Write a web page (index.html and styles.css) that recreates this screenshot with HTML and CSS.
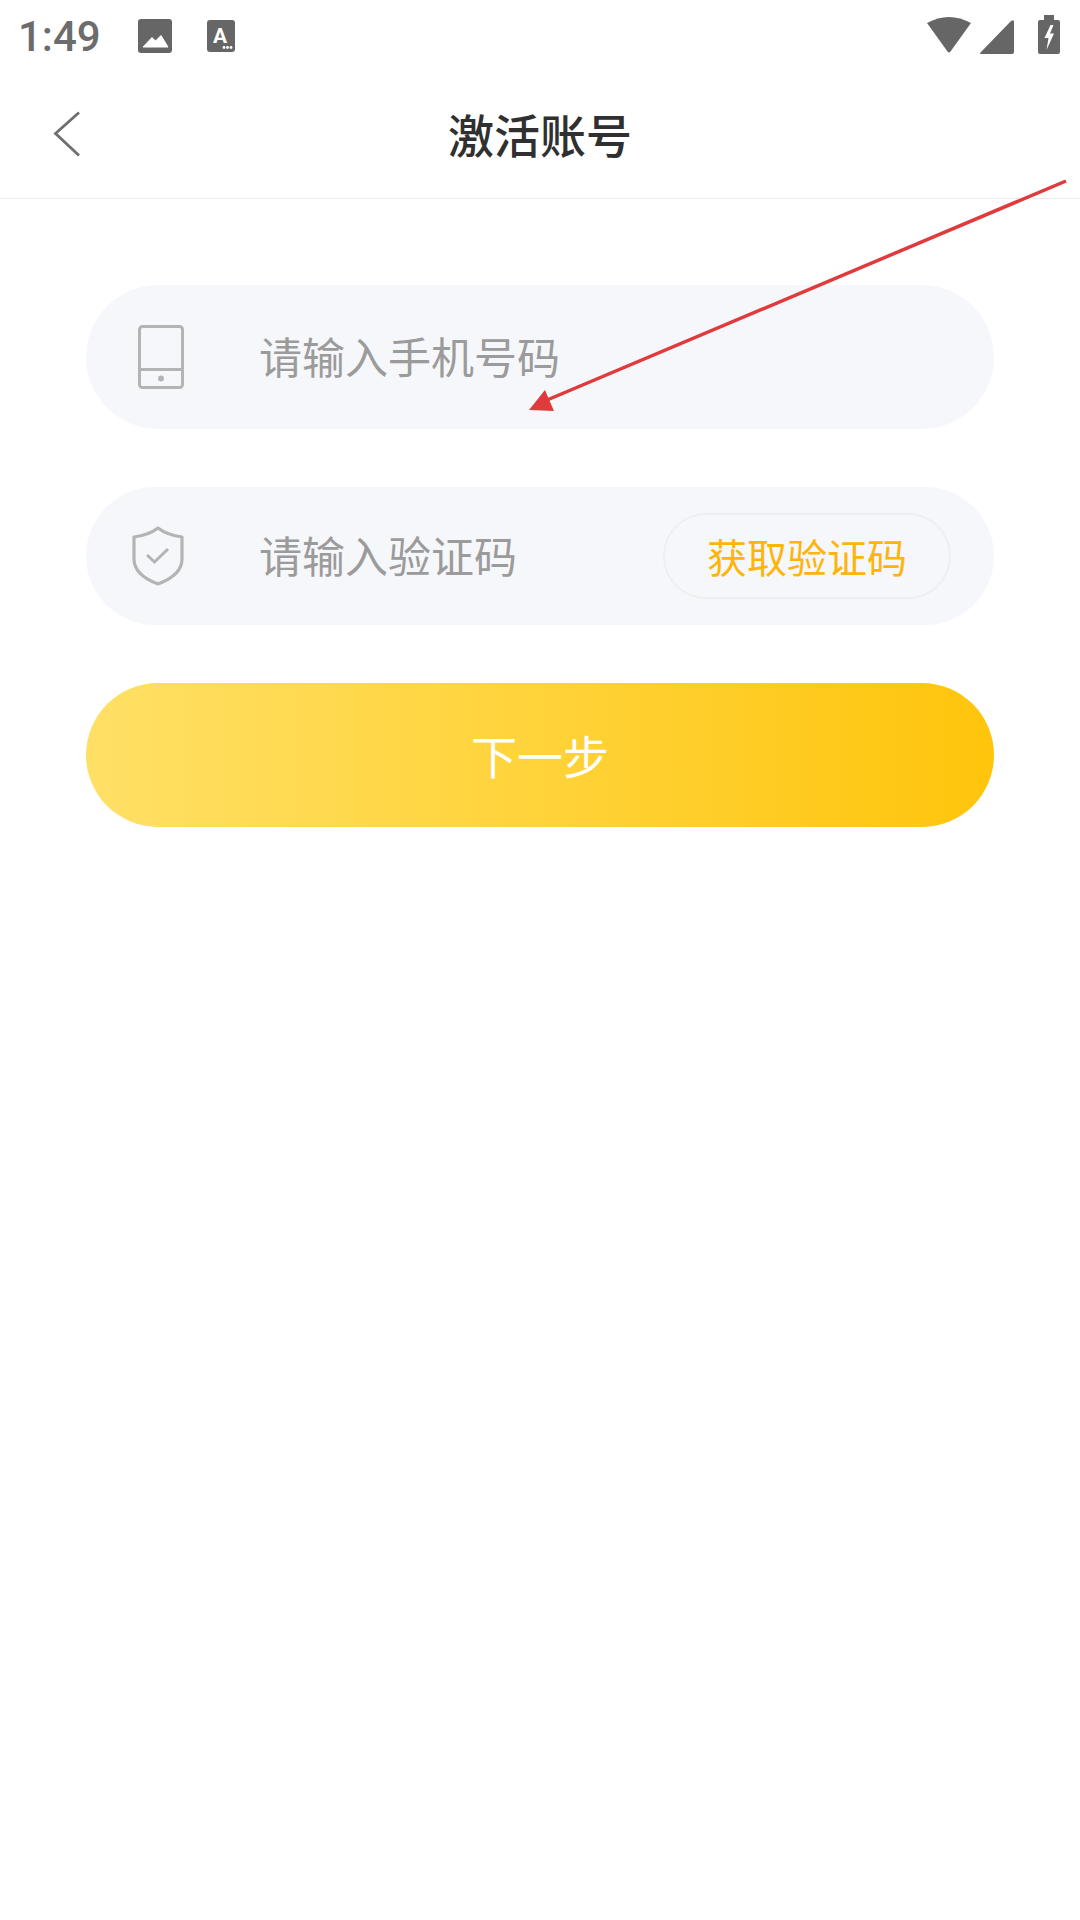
FILE: index.html
```html
<!DOCTYPE html>
<html lang="zh-CN">
<head>
<meta charset="utf-8">
<title>激活账号</title>
<link rel="stylesheet" href="styles.css">
</head>
<body>
<div class="page">
  <div class="status-bar">
    <div class="status-left">
      <span class="time">1:49</span>
      <svg class="ic-image" viewBox="0 0 34 34"><rect width="34" height="34" rx="3" fill="#666"/><path d="M5 28 L14 18.500 L17.500 22 L23 16.500 L30 28Z" fill="#fff" stroke="#fff" stroke-linejoin="round"/></svg>
      <svg class="ic-a" viewBox="0 0 28 32"><rect width="28" height="32" rx="3" fill="#666"/><text x="13" y="23" class="ic-a-text">A</text><circle cx="17" cy="27.500" r="1.400" fill="#fff"/><circle cx="20.500" cy="27.500" r="1.400" fill="#fff"/><circle cx="24" cy="27.500" r="1.400" fill="#fff"/></svg>
    </div>
    <div class="status-right">
      <svg class="ic-wifi" viewBox="0 0 46 36"><path d="M1 6 Q23 -6 45 6 L24.500 34.500 Q23 36.500 21.500 34.500Z" fill="#666"/></svg>
      <svg class="ic-signal" viewBox="0 0 34 34"><path d="M1 34 Q-.5 34 .5 32.500 L31 1 Q34 -1 34 2 V32 Q34 34 32 34Z" fill="#666"/></svg>
      <svg class="ic-battery" viewBox="0 0 22 39"><path d="M6 0 H16 V5 H20 Q22 5 22 7 V37 Q22 39 20 39 H2 Q0 39 0 37 V7 Q0 5 2 5 H6Z" fill="#666"/><path d="M12.500 10 L6.500 23 H10.500 L8.500 35 L16 18.500 H12 L15.500 10Z" fill="#fff"/></svg>
    </div>
  </div>
  <header class="nav">
    <svg class="back" viewBox="0 0 28 46"><path d="M26 1.500 L2.500 22.500 L26 44.500" fill="none" stroke="#6e6e6e" stroke-width="2.800"/></svg>
    <h1 class="title">激活账号</h1>
  </header>
  <main class="form">
    <div class="field field-phone">
      <span class="field-icon">
        <svg class="ic-phone" viewBox="0 0 46 64"><rect x="1.500" y="1.500" width="43" height="61" rx="3" fill="none" stroke="#b4b4b4" stroke-width="3"/><path d="M1.500 44.500 H44.500" stroke="#b4b4b4" stroke-width="3"/><circle cx="23" cy="53.500" r="3" fill="#b4b4b4"/></svg>
      </span>
      <span class="placeholder">请输入手机号码</span>
    </div>
    <div class="field field-code">
      <span class="field-icon">
        <svg class="ic-shield" viewBox="0 0 52 60"><path d="M26 2 Q35 9 50 11 V33 Q50 49 26 58 Q2 49 2 33 V11 Q17 9 26 2Z" fill="none" stroke="#b4b4b4" stroke-width="3.200" stroke-linejoin="round"/><path d="M15 29 L22.500 36 L36 23" fill="none" stroke="#b4b4b4" stroke-width="3"/></svg>
      </span>
      <span class="placeholder">请输入验证码</span>
      <button class="code-btn">获取验证码</button>
    </div>
    <button class="next">下一步</button>
  </main>
  <svg class="arrow" viewBox="0 0 1080 1920"><path d="M1066 181 L540 403" stroke="#e03a3c" stroke-width="3.500" fill="none"/><path d="M529 410 L545 390 L554 411Z" fill="#e03a3c"/></svg>
</div>
</body>
</html>
```

FILE: styles.css
```css
* { box-sizing: border-box; }
html, body { margin: 0; padding: 0; background: #fff; }
body { font-family: "Roboto", "Noto Sans CJK SC", sans-serif; }
.page { position: relative; width: 1080px; height: 1920px; overflow: hidden; }

.status-bar { height: 72px; display: flex; justify-content: space-between; align-items: flex-start; padding: 15px 20px 0 18px; }
.status-left { display: flex; align-items: center; height: 40px; }
.time { font-size: 42px; font-weight: 500; line-height: 40px; color: #6c6c6c; width: 82px; padding-top: 3px; }
.ic-image { width: 34px; height: 34px; margin-left: 38px; margin-top: 2px; }
.ic-a { width: 28px; height: 32px; margin-left: 35px; margin-top: 2px; }
.ic-a-text { font-family: "Roboto", sans-serif; font-size: 21px; font-weight: 700; fill: #fff; text-anchor: middle; }
.status-right { display: flex; align-items: flex-start; }
.ic-wifi { width: 46px; height: 36px; margin-top: 2px; }
.ic-signal { width: 34px; height: 34px; margin-left: 8px; margin-top: 5px; }
.ic-battery { width: 22px; height: 39px; margin-left: 24px; }

.nav { position: relative; height: 127px; display: flex; align-items: center; justify-content: center; border-bottom: 1px solid #ececec; padding-top: 3px; }
.back { position: absolute; left: 53px; top: 39px; width: 28px; height: 46px; }
.title { margin: 0; font-size: 46px; line-height: 60px; font-weight: 500; color: #303030; }

.form { padding: 86px 86px 0 86px; display: flex; flex-direction: column; }
.field { display: flex; align-items: center; background: #f6f7fa; border-radius: 72px; }
.field-phone { height: 144px; margin-bottom: 58px; }
.field-code { height: 138px; margin-bottom: 58px; padding-right: 43px; }
.field-icon { width: 173px; display: flex; justify-content: center; flex: none; padding-right: 48px; padding-left: 24px; }
.ic-phone { width: 46px; height: 64px; }
.ic-shield { width: 52px; height: 60px; margin-right: 5px; }
.placeholder { font-size: 43px; line-height: 60px; color: #9b9b9b; flex: 1; padding-top: 3px; }
.code-btn { width: 288px; height: 86px; border: 2px solid #eeeff1; border-radius: 43px; background: #f6f7fa; color: #fdb50b; font-family: inherit; font-size: 40px; padding: 0; }
.next { height: 144px; border: 0; border-radius: 72px; background: linear-gradient(90deg, #ffe066, #ffc50c); color: #fff; font-family: inherit; font-size: 46px; padding: 0 0 3px; }

.arrow { position: absolute; left: 0; top: 0; width: 1080px; height: 1920px; pointer-events: none; }
```
